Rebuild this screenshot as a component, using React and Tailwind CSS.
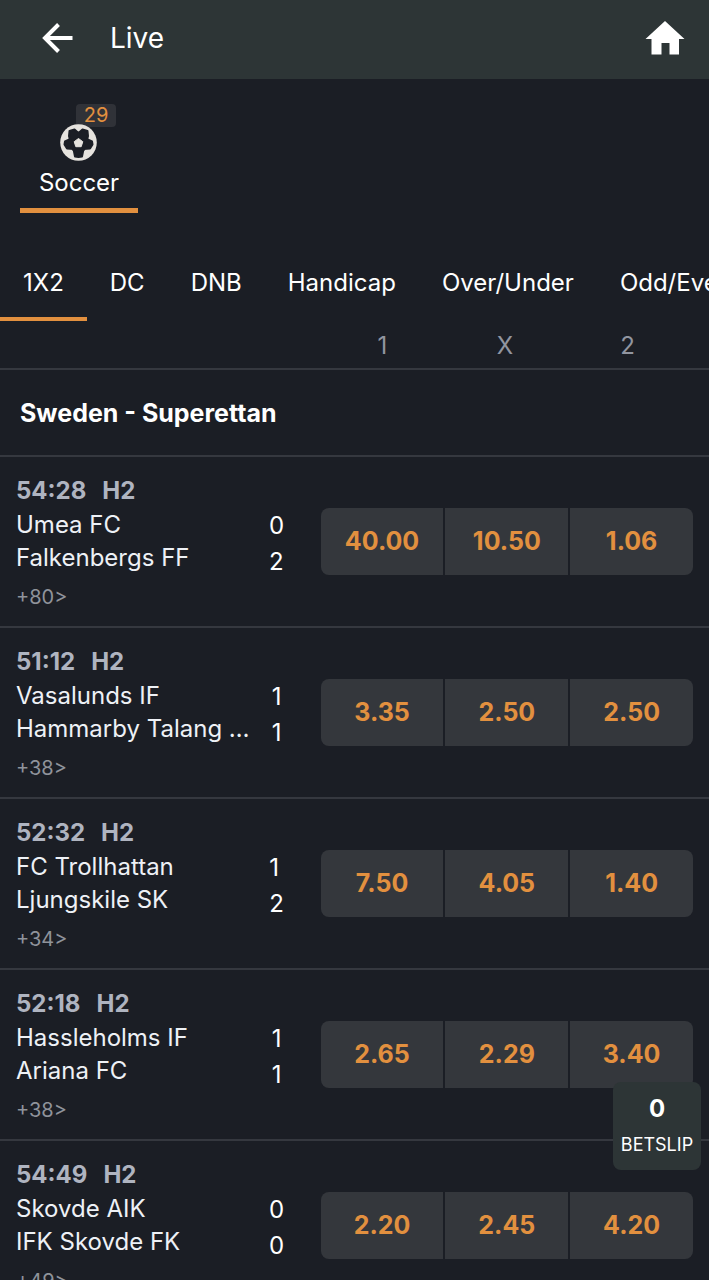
import React, { useState } from 'react';

const markets = ['1X2', 'DC', 'DNB', 'Handicap', 'Over/Under', 'Odd/Even'];

const matches = [
    { id: 1, time: '54:28', period: 'H2', home: 'Umea FC', away: 'Falkenbergs FF', score: [0, 2], odds: ['40.00', '10.50', '1.06'], more: 80 },
    { id: 2, time: '51:12', period: 'H2', home: 'Vasalunds IF', away: 'Hammarby Talang FF', score: [1, 1], odds: ['3.35', '2.50', '2.50'], more: 38 },
    { id: 3, time: '52:32', period: 'H2', home: 'FC Trollhattan', away: 'Ljungskile SK', score: [1, 2], odds: ['7.50', '4.05', '1.40'], more: 34 },
    { id: 4, time: '52:18', period: 'H2', home: 'Hassleholms IF', away: 'Ariana FC', score: [1, 1], odds: ['2.65', '2.29', '3.40'], more: 38 },
    { id: 5, time: '54:49', period: 'H2', home: 'Skovde AIK', away: 'IFK Skovde FK', score: [0, 0], odds: ['2.20', '2.45', '4.20'], more: 49 }
];

const BackIcon = () => (
    <svg viewBox="0 0 32 32" className="w-8 h-8" fill="none" stroke="currentColor" strokeWidth="4">
        <path d="M31.500 16H4M17.500 2.500L4 16l13.500 13.500" />
    </svg>
);

const HomeIcon = () => (
    <svg viewBox="0 0 40 36" className="w-10 h-9" fill="currentColor">
        <path d="M20 1L39.500 19H34v15.500H24.500V23h-8v11.500H6.500V19H.5z" />
    </svg>
);

const SoccerIcon = () => (
    <svg viewBox="0 0 38 38" className="w-[38px] h-[38px]">
        <circle cx="18.500" cy="18.500" r="18.300" fill="#e6e3de" />
        <g fill="#1b1e25" stroke="#1b1e25" strokeWidth="2" strokeLinejoin="round">
            <path d="M18.500 10l8.500 6-3.200 10H13.200L10 16z" />
            <path d="M9.500 7l5-1.500L18.500 9l4-3.500 5 1.500.5 5-1 4H10l-1-4z" />
            <path d="M10.500 15l-5.500 2.500-.5 3 2.500 4 6.500.5zM26.500 15l5.500 2.500.5 3-2.500 4-6.500.5z" />
            <path d="M13.500 25l1.500 7.500 3.500.5 3.500-.5 1.500-7.500z" />
        </g>
        <path fill="#e6e3de" stroke="#e6e3de" strokeLinejoin="round" d="M18.500 14.500l4.300 3.200-1.600 5h-5.400l-1.600-5z" />
    </svg>
);

const MatchRow = ({ match }) => (
    <li className="flex items-start px-4 pt-[17px] pb-[11px] border-b-2 border-[#35383f]">
        <div className="flex-1 min-w-0">
            <div className="flex gap-4 leading-[34px] font-bold text-[#afb4c0]">
                <span>{match.time}</span>
                <span>{match.period}</span>
            </div>
            <div className="flex">
                <div className="flex-1 min-w-0 leading-[33px] text-[#eef1f6]">
                    <p className="truncate">{match.home}</p>
                    <p className="truncate">{match.away}</p>
                </div>
                <div className="w-[70px] h-[66px] flex justify-center pr-[18px] leading-9">
                    <div>
                        <p>{match.score[0]}</p>
                        <p>{match.score[1]}</p>
                    </div>
                </div>
            </div>
            <a href="#" className="block pt-1.5 text-xl leading-[35px] text-[#8f939b]">+{match.more}&gt;</a>
        </div>
        <div className="w-[55%] mt-[34px] grid grid-cols-3 gap-0.5 rounded-lg overflow-hidden">
            {match.odds.map((odd, i) => (
                <button key={i} className="h-[67px] bg-[#34373c] text-[25px] font-bold text-[#e2903f]">{odd}</button>
            ))}
        </div>
    </li>
);

const App = () => {
    const [market, setMarket] = useState('1X2');

    return (
        <div className="h-screen flex flex-col bg-[#1b1e25] text-white text-2xl font-['Inter',sans-serif]">
            <header className="h-[79px] shrink-0 flex items-center bg-[#2d3536] pl-[41px] pr-6 pb-1">
                <button aria-label="Back"><BackIcon /></button>
                <h1 className="flex-1 pl-[37px] pt-0.5 text-[28px]">Live</h1>
                <a href="#" aria-label="Home"><HomeIcon /></a>
            </header>

            <main className="flex-1 min-h-0 overflow-y-auto [scrollbar-width:none]">
                {/* Sports */}
                <nav className="px-5 pt-[45px]">
                    <button className="relative w-[118px] flex flex-col items-center border-b-[5px] border-[#e2903f]">
                        <span className="absolute -top-5 right-[22px] w-10 rounded bg-[#303238] text-xl leading-[23px] text-[#e2903f]">29</span>
                        <span className="relative"><SoccerIcon /></span>
                        <span className="pt-1 pb-2 leading-[34px]">Soccer</span>
                    </button>
                </nav>

                {/* Markets */}
                <nav className="flex mt-8 overflow-hidden">
                    {markets.map((m) => (
                        <button
                            key={m}
                            onClick={() => setMarket(m)}
                            className={`h-[76px] px-[23px] pt-1 shrink-0 border-b-4 ${market === m ? 'border-[#e2903f]' : 'border-transparent'}`}
                        >
                            {m}
                        </button>
                    ))}
                </nav>

                <div className="h-[49px] flex justify-end border-b-2 border-[#35383f]">
                    <div className="w-[55%] pl-0.5 pr-5 pt-0.5 grid grid-cols-3 items-center text-center text-[#9195a0]">
                        <span>1</span>
                        <span>X</span>
                        <span>2</span>
                    </div>
                </div>

                <h2 className="h-[87px] flex items-center px-5 pt-0.5 text-[25px] font-bold border-b-2 border-[#35383f]">Sweden - Superettan</h2>

                <ul>
                    {matches.map((match) => (
                        <MatchRow key={match.id} match={match} />
                    ))}
                </ul>
            </main>

            <button className="fixed right-2 bottom-[110px] w-[88px] h-[88px] rounded-lg bg-[#2d3536] flex flex-col items-center justify-center pt-0.5">
                <span className="font-bold leading-9">0</span>
                <span className="text-lg leading-9">BETSLIP</span>
            </button>
        </div>
    );
};

export default App;
